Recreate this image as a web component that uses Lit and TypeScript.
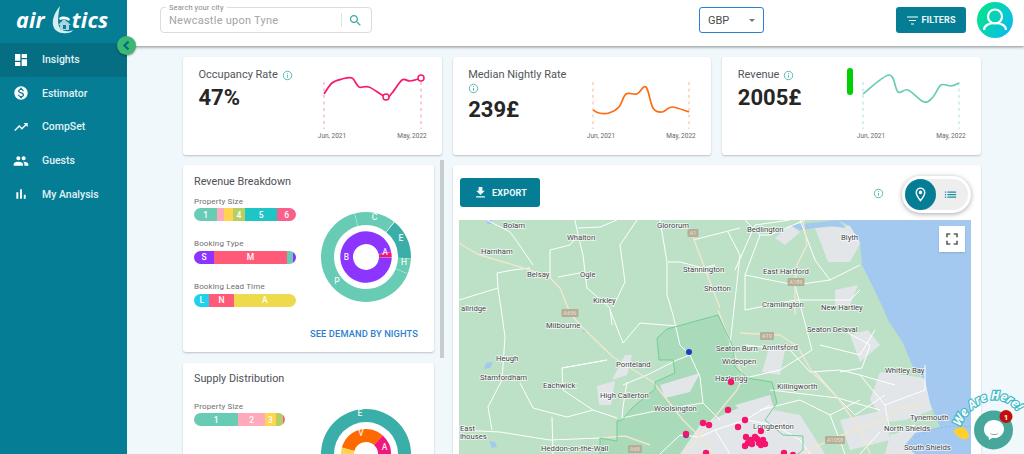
import { LitElement, html, css, svg } from "lit";
import { customElement } from "lit/decorators.js";

type Pt = [number, number];

const ICONS: Record<string, string> = {
  dashboard: "M3 13h8V3H3v10zm0 8h8v-6H3v6zm10 0h8V11h-8v10zm0-18v6h8V3h-8z",
  money:
    "M12 2C6.48 2 2 6.48 2 12s4.48 10 10 10 10-4.48 10-10S17.52 2 12 2zm1.41 16.09V20h-2.67v-1.93c-1.71-.36-3.16-1.46-3.27-3.4h1.96c.1 1.05.82 1.87 2.65 1.87 1.96 0 2.4-.98 2.4-1.59 0-.83-.44-1.61-2.67-2.14-2.48-.6-4.18-1.62-4.18-3.67 0-1.72 1.39-2.84 3.11-3.21V4h2.67v1.95c1.86.45 2.79 1.86 2.85 3.39H14.3c-.05-1.11-.64-1.87-2.22-1.87-1.5 0-2.4.68-2.4 1.64 0 .84.65 1.39 2.67 1.91s4.18 1.39 4.18 3.91c-.01 1.83-1.38 2.83-3.12 3.16z",
  trend: "M16 6l2.29 2.29-4.88 4.88-4-4L2 16.59 3.41 18l6-6 4 4 6.3-6.29L22 12V6z",
  people:
    "M16 11c1.66 0 2.99-1.34 2.99-3S17.66 5 16 5c-1.66 0-3 1.34-3 3s1.34 3 3 3zm-8 0c1.66 0 2.99-1.34 2.99-3S9.66 5 8 5C6.34 5 5 6.34 5 8s1.34 3 3 3zm0 2c-2.33 0-7 1.17-7 3.5V19h14v-2.5c0-2.33-4.67-3.5-7-3.5zm8 0c-.29 0-.62.02-.97.05 1.16.84 1.97 1.97 1.97 3.45V19h6v-2.5c0-2.33-4.67-3.5-7-3.5z",
  bars: "M5 9.2h3V19H5zM10.6 5h2.8v14h-2.8zm5.6 8H19v6h-2.8z",
  search:
    "M15.5 14h-.79l-.28-.27C15.41 12.59 16 11.11 16 9.5 16 5.91 13.09 3 9.5 3S3 5.91 3 9.5 5.91 16 9.5 16c1.61 0 3.09-.59 4.23-1.57l.27.28v.79l5 4.99L20.49 19l-4.99-5zm-6 0C7.01 14 5 11.99 5 9.5S7.01 5 9.5 5 14 7.01 14 9.5 11.99 14 9.5 14z",
  download: "M19 9h-4V3H9v6H5l7 7 7-7zM5 18v2h14v-2H5z",
  pin: "M12 2C8.13 2 5 5.13 5 9c0 5.25 7 13 7 13s7-7.75 7-13c0-3.87-3.13-7-7-7zM7 9c0-2.76 2.24-5 5-5s5 2.24 5 5c0 2.88-2.88 7.19-5 9.88C9.92 16.21 7 11.85 7 9zm5-2.5a2.5 2.5 0 1 0 0 5 2.5 2.5 0 0 0 0-5z",
  list: "M3 13h2v-2H3v2zm0 4h2v-2H3v2zm0-8h2V7H3v2zm4 4h14v-2H7v2zm0 4h14v-2H7v2zM7 7v2h14V7H7z",
  fullscreen: "M7 14H5v5h5v-2H7v-3zm-2-4h2V7h3V5H5v5zm12 7h-3v2h5v-5h-2v3zM14 5v2h3v3h2V5h-5z",
};

const icon = (name: string, cls = "") =>
  html`<svg class="icon ${cls}" viewBox="0 0 24 24"><path d=${ICONS[name]}></path></svg>`;

const info = () =>
  html`<svg class="info" viewBox="0 0 12 12">
    <circle cx="6" cy="6" r="4.6"></circle>
    <path d="M6 5.4v3M6 3.4v1"></path>
  </svg>`;

// smooth line through the sampled points
function smooth(p: Pt[]): string {
  let d = `M${p[0][0]} ${p[0][1]}`;
  for (let i = 0; i < p.length - 1; i++) {
    const a = p[Math.max(i - 1, 0)];
    const b = p[i];
    const c = p[i + 1];
    const e = p[Math.min(i + 2, p.length - 1)];
    const k = 0.17;
    d += `C${b[0] + (c[0] - a[0]) * k} ${b[1] + (c[1] - a[1]) * k} ${c[0] - (e[0] - b[0]) * k} ${c[1] - (e[1] - b[1]) * k} ${c[0]} ${c[1]}`;
  }
  return d;
}

function arc(cx: number, cy: number, r0: number, r1: number, from: number, to: number): string {
  const pt = (r: number, deg: number) => {
    const a = ((deg - 90) * Math.PI) / 180;
    return `${(cx + r * Math.cos(a)).toFixed(2)} ${(cy + r * Math.sin(a)).toFixed(2)}`;
  };
  const large = to - from > 180 ? 1 : 0;
  return `M${pt(r1, from)}A${r1} ${r1} 0 ${large} 1 ${pt(r1, to)}L${pt(r0, to)}A${r0} ${r0} 0 ${large} 0 ${pt(r0, from)}Z`;
}

interface Kpi {
  title: string;
  value: string;
  color: string;
  dash: string;
  points: Pt[];
  x1: number;
  rings?: boolean;
  pill?: boolean;
  wrap?: boolean;
}

const KPIS: Kpi[] = [
  {
    title: "Occupancy Rate",
    value: "47%",
    color: "#f9186f",
    dash: "#ff8fb8",
    x1: 113,
    rings: true,
    points: [[16, 37], [24, 26], [34, 22], [44, 21], [51, 30], [61, 30], [78, 40], [84, 36], [94, 23], [102, 24], [113, 21]],
  },
  {
    title: "Median Nightly Rate",
    value: "239£",
    color: "#ff6a0f",
    dash: "#ffb48c",
    x1: 112,
    wrap: true,
    points: [[16, 53], [22, 56], [32, 56], [42, 50], [49, 37], [60, 37], [69, 30], [76, 51], [85, 55], [95, 50], [112, 55]],
  },
  {
    title: "Revenue",
    value: "2005£",
    color: "#68ccb5",
    dash: "#a9e3d5",
    x1: 112,
    pill: true,
    points: [[16, 37], [42, 18], [51, 35], [61, 33], [77, 45], [86, 40], [94, 28], [104, 29], [112, 26]],
  },
];

const NAV = [
  ["dashboard", "Insights"],
  ["money", "Estimator"],
  ["trend", "CompSet"],
  ["people", "Guests"],
  ["bars", "My Analysis"],
];

type Seg = [string, number, string];

const BREAKDOWN: { label: string; segs: Seg[] }[] = [
  {
    label: "Property Size",
    segs: [["1", 23.3, "#68ccb5"], ["", 7, "#ffa9bd"], ["", 8.3, "#ffd451"], ["4", 12.3, "#b5cf63"], ["5", 32, "#1fc4c4"], ["6", 18.7, "#f7608a"]],
  },
  {
    label: "Booking Type",
    segs: [["S", 20, "#8b35ff"], ["M", 73, "#ff5a78"], ["", 5.7, "#68ccb5"], ["", 3.3, "#8b35ff"]],
  },
  {
    label: "Booking Lead Time",
    segs: [["L", 15.3, "#1ed2ee"], ["N", 24.3, "#ff5a78"], ["A", 62, "#eeda4d"]],
  },
];

const SUPPLY: Seg[] = [["1", 44.3, "#68ccb5"], ["2", 26.7, "#ffa9bd"], ["3", 11, "#ffd451"], ["", 7.3, "#b5cf63"], ["", 1.7, "#f7608a"]];

const ROADS_WHITE = [
  "487,220 510,232 518,243 533,265",
  "575,220 578,235 570,245 550,250 550,278",
  "578,235 583,255 585,272 558,277",
  "585,272 587,288 610,308 612,325",
  "617,220 600,227 578,228",
  "637,220 620,245 625,282 613,307",
  "660,220 667,262 667,295 673,315 680,345 690,355",
  "668,262 680,262 703,268 715,265",
  "459,300 498,288 497,273 513,270 530,268",
  "498,288 502,315 505,337 502,380 488,407 492,430",
  "459,430 500,432 550,440 600,438",
  "562,368 607,360 562,368 563,390 593,410 617,418",
  "520,383 533,408 567,417 593,410",
  "552,417 553,454",
  "610,310 623,343 640,323 677,326",
  "623,385 647,375 677,360 690,355 700,377 703,403 720,420",
  "622,418 623,407 627,382",
  "622,418 660,410 703,403",
  "735,270 755,225 790,220",
  "693,240 740,228",
  "728,232 740,255 735,300 730,345",
  "745,220 760,235 770,235 805,220",
  "760,235 745,275 745,310",
  "745,275 795,285 830,280 860,265",
  "745,310 795,300 850,300 860,290",
  "800,220 815,260 830,280",
  "795,285 812,350 780,370 745,378",
  "745,345 790,350 810,372 840,370 860,375 895,385",
  "815,372 838,398 880,410",
  "843,330 870,345 862,368 840,372",
  "820,345 860,355 875,330",
  "860,375 885,405 925,390 925,365",
  "885,405 890,432 915,425",
  "770,390 838,398 855,415 885,395",
  "760,410 800,400 830,415 860,400",
  "830,415 845,454",
  "775,425 800,440 810,454",
  "880,432 860,454",
  "700,437 715,430 745,420 775,425",
  "715,430 730,454",
  "745,420 770,405",
  "660,454 680,435 700,437",
];

const ROADS_BEIGE = [
  "459,243 477,254 530,270 550,278 560,288 570,313 580,325 613,357 653,382 683,420 700,437 715,454",
  "718,310 733,350 743,377 737,390 698,437 685,454",
  "693,237 710,282 720,308",
  "803,220 807,245 797,265 795,282 795,315",
  "740,333 780,335 798,347 812,372 838,398 862,433 870,454",
  "802,453 837,437 887,418 900,408 923,404",
  "600,438 625,436 650,445",
];

const URBAN = [
  "815,228 860,225 862,240 850,262 828,262",
  "597,386 615,381 611,405 599,405",
  "612,380 625,355 632,355 627,375",
  "660,385 700,373 690,392 665,398",
  "770,345 785,350 780,375 762,372",
  "850,335 868,330 880,345 860,362",
  "880,372 925,378 932,410 905,420 885,422 870,400",
  "700,425 745,405 800,415 825,454 680,454",
  "840,420 885,410 890,440 850,450",
  "890,435 925,425 930,454 885,454",
  "775,238 790,225 800,232 785,245",
  "735,405 770,395 775,412 745,415",
  "835,290 858,285 850,305 835,305",
];

const LABELS: [string, number, number][] = [
  ["Bolam", 503, 227.5], ["Whalton", 567, 240], ["Harnham", 481, 254], ["Belsay", 527, 277], ["Ogle", 580, 277],
  ["Kirkley", 593, 303], ["Glororum", 657, 227.5], ["Stannington", 683, 272], ["Shotton", 704, 291], ["allridge", 461, 311],
  ["Bedlington", 747, 232], ["Blyth", 841, 240], ["East Hartford", 763, 274], ["Cramlington", 762, 307], ["New Hartley", 821, 310],
  ["Milbourne", 546, 328], ["Heugh", 496, 361], ["Stamfordham", 480, 380], ["Eachwick", 543, 388], ["Ponteland", 616, 367],
  ["High Callerton", 600, 398], ["Woolsington", 654, 411], ["Seaton Burn", 716, 351], ["Wideopen", 722, 364], ["Hazlerigg", 715, 381],
  ["East", 460, 431], ["lhouses", 460, 439], ["Heddon-on-the-Wall", 541, 451], ["Seaton Delaval", 807, 332], ["Annitsford", 762, 350],
  ["Whitley Bay", 885, 373], ["Killingworth", 777, 389], ["Longbenton", 753, 429], ["Tynemouth", 910, 420], ["North Shields", 884, 431],
  ["South Shields", 904, 450],
];

const SHIELDS: [string, number, number, number][] = [
  ["A1", 693, 233, 11],
  ["A696", 570, 313, 17],
  ["A19", 767, 336, 14],
  ["A189", 796, 282, 17],
  ["A1058", 835, 440, 20],
  ["A69", 635, 449, 14],
];

const DOTS: Pt[] = [
  [731, 382], [728, 410], [745, 420], [738, 427], [703, 423], [709, 425], [686, 434], [746, 437], [745, 446], [706, 453],
  [748, 443], [761, 431], [755, 437], [759, 443], [763, 440], [752, 444], [757, 439], [765, 444], [751, 440], [761, 445],
  [784, 453], [793, 455],
];

@customElement("app-root")
export class AppRoot extends LitElement {
  static styles = css`
    :host {
      display: block;
      height: 454px;
      overflow: hidden;
      position: relative;
      background: #f1f8fb;
      font-family: Roboto, "Liberation Sans", sans-serif;
      color: #3c4043;
    }
    .icon {
      fill: currentColor;
      display: block;
    }
    .info {
      width: 11px;
      height: 11px;
      flex: none;
      fill: none;
      stroke: #4db6ac;
      stroke-width: 1;
    }
    .shell {
      display: flex;
      height: 454px;
    }
    .side {
      width: 127px;
      flex: none;
      background: #047d95;
      color: #fff;
      position: relative;
      z-index: 2;
    }
    .logo {
      height: 43px;
      display: flex;
      align-items: center;
      padding: 0 0 4px 16px;
      box-sizing: border-box;
      font: italic 700 21.5px "Open Sans", sans-serif;
      letter-spacing: 0.2px;
    }
    .logo svg {
      width: 24px;
      height: 30px;
      margin: 0 -2px 0 5px;
    }
    .nav-item {
      height: 33.6px;
      display: flex;
      align-items: center;
      padding-left: 13px;
      gap: 13px;
      font-size: 10.5px;
      font-weight: 500;
      color: #e3f2f5;
    }
    .nav-item .icon {
      width: 16px;
      height: 16px;
      color: #fff;
    }
    .nav-item.active {
      background: #056e83;
    }
    .toggle {
      position: absolute;
      left: 117px;
      top: 36px;
      width: 19px;
      height: 19px;
      border-radius: 50%;
      background: #3db874;
      box-shadow: 0 1px 2px rgba(0, 0, 0, 0.4);
      z-index: 3;
    }
    .toggle svg {
      display: block;
      width: 19px;
      height: 19px;
      fill: none;
      stroke: #056e83;
      stroke-width: 2.4;
    }
    .body {
      flex: 1;
      min-width: 0;
    }
    .top {
      height: 46px;
      background: #fff;
      box-shadow: 0 1px 3px rgba(0, 0, 0, 0.45);
      display: flex;
      align-items: center;
      padding: 0 10px 6px 33px;
      box-sizing: border-box;
      position: relative;
      z-index: 1;
    }
    .search {
      width: 212px;
      height: 26px;
      box-sizing: border-box;
      border: 1px solid #dcdcdc;
      border-radius: 4px;
      display: flex;
      align-items: center;
      padding: 0 8px;
      position: relative;
      font-size: 11px;
      letter-spacing: 0.25px;
      color: #a4a4a4;
    }
    .search .float {
      position: absolute;
      left: 5px;
      top: -5px;
      background: #fff;
      padding: 0 3px;
      font-size: 7.5px;
      color: #8a8a8a;
      letter-spacing: 0.1px;
    }
    .search .place {
      flex: 1;
    }
    .search .divider {
      width: 1px;
      height: 14px;
      background: #e2e2e2;
    }
    .search .icon {
      width: 15px;
      height: 15px;
      margin: 0 0 0 6px;
      color: #3aa99f;
    }
    .select {
      margin-left: 327px;
      width: 65px;
      height: 26px;
      box-sizing: border-box;
      border: 1.5px solid #2b7fd6;
      border-radius: 3px;
      display: flex;
      align-items: center;
      justify-content: space-between;
      padding: 0 8px 0 8px;
      font-size: 11px;
      color: #4a4a4a;
    }
    .caret {
      width: 0;
      height: 0;
      border-left: 3.5px solid transparent;
      border-right: 3.5px solid transparent;
      border-top: 3.5px solid #777;
    }
    .filters {
      margin-left: 132px;
      width: 70px;
      height: 26px;
      border-radius: 3px;
      background: #047d95;
      color: #e9f6f8;
      display: flex;
      align-items: center;
      justify-content: center;
      gap: 2px;
      font-size: 9px;
      font-weight: 700;
      letter-spacing: 0.1px;
    }
    .filters svg {
      width: 13px;
      height: 11px;
      fill: none;
      stroke: #fff;
      stroke-width: 1.1;
    }
    .avatar {
      margin-left: 11px;
      width: 36px;
      height: 36px;
      border-radius: 50%;
      background: linear-gradient(120deg, #05e38c 10%, #09b9f5 95%);
      flex: none;
    }
    .avatar svg {
      display: block;
      width: 36px;
      height: 36px;
      fill: none;
      stroke: #fff;
      stroke-width: 2.2;
    }
    .main {
      padding: 11px 43px 0 56px;
    }
    .kpis {
      display: grid;
      grid-template-columns: repeat(3, minmax(0, 1fr));
      gap: 11px;
    }
    .card {
      background: #fff;
      border-radius: 3px;
      box-shadow: 0 1px 2px rgba(0, 0, 0, 0.22);
    }
    .kpi {
      height: 98px;
      display: flex;
      justify-content: space-between;
      box-sizing: border-box;
      padding: 11px 0 0 15.500px;
    }
    .kpi-text {
      min-width: 0;
    }
    .kpi-title {
      display: flex;
      align-items: center;
      flex-wrap: wrap;
      gap: 1px 4px;
      font-size: 11px;
      line-height: 14px;
      color: #51565b;
    }
    .kpi-title span {
      white-space: nowrap;
    }
    .kpi-title.wrap {
      width: 100px;
    }
    .kpi-value {
      font-size: 22px;
      font-weight: 700;
      line-height: 26px;
      margin-top: 3px;
      color: #262626;
    }
    .spark {
      width: 134px;
      height: 88px;
      flex: none;
      margin-top: -11px;
    }
    .spark text {
      font: 6.5px Roboto, sans-serif;
      fill: #666;
      text-anchor: middle;
    }
    .lower {
      display: flex;
      gap: 19px;
      margin-top: 10px;
    }
    .col {
      width: 251px;
      flex: none;
      display: flex;
      flex-direction: column;
      gap: 11px;
      position: relative;
    }
    .thumb {
      position: absolute;
      left: 257px;
      top: -5px;
      width: 4px;
      height: 198px;
      background: #c6cccf;
    }
    .panel {
      padding: 10px 11px 0;
      box-sizing: border-box;
      position: relative;
    }
    .breakdown {
      height: 187px;
    }
    .supply {
      height: 130px;
      padding-top: 9px;
    }
    .panel-title {
      font-size: 10.8px;
      line-height: 14px;
      color: #4d5156;
    }
    .group {
      margin-top: 6.500px;
      margin-bottom: 17.300px;
      width: 102px;
    }
    .supply .group {
      width: 91px;
      margin-top: 14.500px;
    }
    .group-label {
      font-size: 8px;
      line-height: 11px;
      letter-spacing: 0.15px;
      color: #6f6f6f;
      margin-bottom: 1.500px;
      white-space: nowrap;
    }
    .bar {
      height: 13px;
      display: flex;
      border-radius: 7px;
      overflow: hidden;
    }
    .bar span {
      display: flex;
      align-items: center;
      justify-content: center;
      font-size: 8.5px;
      font-weight: 500;
      color: #fff;
    }
    .donut {
      position: absolute;
      left: 131px;
      width: 104px;
      height: 104px;
    }
    .breakdown .donut {
      top: 40px;
    }
    .supply .donut {
      top: 39px;
    }
    .donut text {
      font: 500 8.5px Roboto, sans-serif;
      fill: #fff;
      fill-opacity: 0.9;
      text-anchor: middle;
    }
    .see {
      position: absolute;
      right: 16px;
      bottom: 13px;
      font-size: 9.3px;
      font-weight: 500;
      letter-spacing: 0.1px;
      color: #2f7fd0;
    }
    .mapcard {
      flex: 1;
      height: 300px;
      padding: 13px 10px 0 6px;
      box-sizing: border-box;
    }
    .map-head {
      display: flex;
      align-items: flex-start;
      height: 42px;
    }
    .export {
      width: 80px;
      height: 29px;
      margin-left: 1px;
      border-radius: 3px;
      background: #047d95;
      color: #eef8fa;
      display: flex;
      align-items: center;
      justify-content: center;
      gap: 4px;
      font-size: 9px;
      font-weight: 700;
      letter-spacing: 0.2px;
    }
    .export .icon {
      width: 15px;
      height: 15px;
    }
    .map-head .info {
      margin: 10px 18px 0 auto;
    }
    .switch {
      width: 69px;
      height: 37px;
      margin-top: -2px;
      box-sizing: border-box;
      border: 3px solid #fff;
      border-radius: 19px;
      background: #eeeeee;
      box-shadow: 0 1px 5px rgba(0, 0, 0, 0.35);
      display: flex;
      align-items: center;
    }
    .switch .on {
      width: 31px;
      height: 31px;
      border-radius: 50%;
      background: #047d95;
      color: #fff;
      display: flex;
      align-items: center;
      justify-content: center;
    }
    .switch .on .icon {
      width: 17px;
      height: 17px;
    }
    .switch > .icon {
      width: 15px;
      height: 15px;
      margin-left: 7px;
      color: #1e8ea6;
    }
    .map {
      position: relative;
      height: 240px;
      overflow: hidden;
    }
    .map > svg {
      display: block;
      width: 512px;
      height: 240px;
    }
    .map text {
      font: 7.7px Roboto, sans-serif;
      fill: #3f4347;
      stroke: #fff;
      stroke-width: 1.6px;
      stroke-opacity: 0.8;
      paint-order: stroke;
    }
    .map text.shield {
      font-size: 5.5px;
      fill: #e8e2d4;
      stroke: none;
      text-anchor: middle;
    }
    .full {
      position: absolute;
      right: 6px;
      top: 6px;
      width: 26px;
      height: 26px;
      background: #fff;
      box-shadow: 0 1px 2px rgba(0, 0, 0, 0.15);
      color: #5f6368;
      display: flex;
      align-items: center;
      justify-content: center;
    }
    .full .icon {
      width: 20px;
      height: 20px;
    }
    .chat {
      position: absolute;
      left: 944px;
      top: 380px;
      width: 80px;
      height: 74px;
      z-index: 4;
    }
    .chat svg {
      display: block;
      width: 80px;
      height: 74px;
      overflow: visible;
    }
    .chat text.wave {
      font: italic 700 12px "Open Sans", sans-serif;
      fill: #fff;
      stroke: #3fb9c6;
      stroke-width: 2.4px;
      paint-order: stroke;
    }
    .chat text.count {
      font: 700 8px Roboto, sans-serif;
      fill: #fff;
      text-anchor: middle;
    }
  `;

  renderBar(segs: Seg[], total = 102) {
    return html`<div class="bar" style="width:${total}px">
      ${segs.map(([t, w, c]) => html`<span style="flex:${w} 0 0;background:${c}">${t}</span>`)}
    </div>`;
  }

  renderSpark(k: Kpi) {
    return html`<svg class="spark" viewBox="0 0 134 88">
      ${k.pill ? svg`<rect x="0" y="11" width="6" height="27" rx="3" fill="#00d000"></rect>` : ""}
      <path d="M16 25V72M${k.x1} 25V72" stroke=${k.dash} stroke-width="1" stroke-dasharray="3 3.5" fill="none"></path>
      <path d=${smooth(k.points)} stroke=${k.color} stroke-width="1.7" fill="none"></path>
      ${k.rings
        ? svg`<circle cx="78" cy="40" r="3" fill="#fff" stroke=${k.color} stroke-width="1.5"></circle>
            <circle cx="113" cy="21" r="3" fill="#fff" stroke=${k.color} stroke-width="1.5"></circle>`
        : ""}
      <text x="24" y="80.5">Jun, 2021</text>
      <text x="104" y="80.5">May, 2022</text>
    </svg>`;
  }

  renderMap() {
    return html`<svg viewBox="459 220 512 240">
      <rect x="459" y="220" width="512" height="240" fill="#bce1c6"></rect>
      <path
        d="M718 315L678 326 667 329 657 338 659 360 673 360 675 373 655 382 655 389 633 407 622 420 617 421 617 441 600 438 600 460 790 460 803 450 803 436 783 435 765 420 777 403 772 382 747 378 735 367 733 347Z"
        fill="#a9dab9"
      ></path>
      ${URBAN.map((p) => svg`<polygon points=${p} fill="#e2e6e9"></polygon>`)}
      <path
        d="M838 220L850 226 860 242 862 265 872 285 883 308 888 320 903 343 913 367 925 380 930 403 940 427 915 433 905 445 915 454 945 460 971 460 971 220Z"
        fill="#a3c9f1"
      ></path>
      <path d="M790 225L820 222 838 220 846 228 830 226 800 230Z" fill="#a3c9f1"></path>
      <path d="M487 220h5v4h-5zM486 363l7-1-3 6-6 1zM489 441l6 1 2 5-5 1zM583 330h4v2h-4z" fill="#a3c9f1"></path>
      <path d="M915 438C930 428 950 424 971 427" fill="none" stroke="#7fb4ea" stroke-width="0.8" stroke-dasharray="2 2"></path>
      ${ROADS_WHITE.map(
        (p) => svg`<polyline points=${p} fill="none" stroke="#fff" stroke-width="1" stroke-linejoin="round"></polyline>`
      )}
      ${ROADS_BEIGE.map(
        (p) => svg`<polyline points=${p} fill="none" stroke="#f3e6cf" stroke-width="1.4" stroke-linejoin="round"></polyline>`
      )}
      <path
        d="M718 315L678 326 667 329 657 338 659 360 673 360 675 373 655 382 655 389 633 407 622 420 617 421 617 441 600 438 600 460M790 460L803 450 803 436 783 435 765 420 777 403 772 382 747 378 735 367 733 347 718 315"
        fill="none"
        stroke="#6fcf97"
        stroke-width="1"
      ></path>
      ${SHIELDS.map(
        ([t, x, y, w]) => svg`<rect x=${x - w / 2} y=${y - 4} width=${w} height="8" rx="1" fill="#b8ad97"></rect>
          <text class="shield" x=${x} y=${y + 2}>${t}</text>`
      )}
      ${LABELS.map(([t, x, y]) => svg`<text x=${x} y=${y}>${t}</text>`)}
      <circle cx="689" cy="352" r="3" fill="#1a3fc4"></circle>
      <circle cx="686" cy="435" r="3" fill="#1a3fc4"></circle>
      ${DOTS.map(([x, y]) => svg`<circle cx=${x} cy=${y} r="3.2" fill="#f5146e"></circle>`)}
    </svg>`;
  }

  render() {
    return html`
      <div class="shell">
        <aside class="side">
          <div class="logo">
            <span>air</span>
            <svg viewBox="0 0 24 30">
              <path d="M10 1C5 7 2 14 3 20c1 6 7 9 14 8 3 0 5-1 6-3-4 2-10 2-13-2-3-4-2-13 0-22z" fill="#d6edf2"></path>
              <path d="M9 13c3-2 8-2 11 1l-1 2c-3-2-6-2-9-1z" fill="#fff"></path>
              <path d="M8 20l6-6 7 6h-2v5h-9v-5z" fill="#a9d6e0"></path>
              <rect x="13" y="20" width="3" height="4" fill="#047d95"></rect>
            </svg>
            <span>tics</span>
          </div>
          ${NAV.map(
            ([ic, label], i) =>
              html`<div class="nav-item ${i === 0 ? "active" : ""}">${icon(ic)}<span>${label}</span></div>`
          )}
          <div class="toggle">
            <svg viewBox="0 0 19 19"><path d="M11.5 5.5L7.5 9.5l4 4"></path></svg>
          </div>
        </aside>
        <div class="body">
          <header class="top">
            <div class="search">
              <span class="float">Search your city</span>
              <span class="place">Newcastle upon Tyne</span>
              <span class="divider"></span>
              ${icon("search")}
            </div>
            <div class="select"><span>GBP</span><span class="caret"></span></div>
            <div class="filters">
              <svg viewBox="0 0 13 11"><path d="M1 2h11M3 5.5h7M5 9h3"></path></svg>
              <span>FILTERS</span>
            </div>
            <div class="avatar">
              <svg viewBox="0 0 36 36">
                <circle cx="18" cy="14.500" r="7"></circle>
                <path d="M7 28c0-4 4-7 11-7s11 3 11 7"></path>
              </svg>
            </div>
          </header>
          <main class="main">
            <section class="kpis">
              ${KPIS.map(
                (k) => html`<div class="card kpi">
                  <div class="kpi-text">
                    <div class="kpi-title ${k.wrap ? "wrap" : ""}">
                      <span>${k.title}</span>${info()}
                    </div>
                    <div class="kpi-value">${k.value}</div>
                  </div>
                  ${this.renderSpark(k)}
                </div>`
              )}
            </section>
            <section class="lower">
              <div class="col">
                <div class="thumb"></div>
                <div class="card panel breakdown">
                  <div class="panel-title">Revenue Breakdown</div>
                  ${BREAKDOWN.map(
                    (g) => html`<div class="group">
                      <div class="group-label">${g.label}</div>
                      ${this.renderBar(g.segs)}
                    </div>`
                  )}
                  <svg class="donut" viewBox="0 0 104 104">
                    <path d=${arc(52, 52, 32, 45, 112, 345)} fill="#68ccb5"></path>
                    <path d=${arc(52, 52, 32, 45, 345.5, 398.5)} fill="#68ccb5"></path>
                    <path d=${arc(52, 52, 32, 45, 39.5, 91.5)} fill="#3aaea8"></path>
                    <path d=${arc(52, 52, 32, 45, 92, 111.5)} fill="#68ccb5"></path>
                    <path d=${arc(52, 52, 13, 25.7, 91, 438)} fill="#8b35ff"></path>
                    <path d=${arc(52, 52, 13, 25.7, 78.5, 90.5)} fill="#f5146e"></path>
                    <text x="60.5" y="15">C</text>
                    <text x="87" y="36">E</text>
                    <text x="90" y="60">H</text>
                    <text x="23" y="79">P</text>
                    <text x="32.5" y="55">B</text>
                    <text x="71" y="50">A</text>
                  </svg>
                  <span class="see">SEE DEMAND BY NIGHTS</span>
                </div>
                <div class="card panel supply">
                  <div class="panel-title">Supply Distribution</div>
                  <div class="group">
                    <div class="group-label">Property Size</div>
                    ${this.renderBar(SUPPLY, 91)}
                  </div>
                  <svg class="donut" viewBox="0 0 104 104">
                    <path d=${arc(52, 52, 32, 45, 0, 180)} fill="#3aaea8"></path>
                    <path d=${arc(52, 52, 32, 45, 180, 360)} fill="#3aaea8"></path>
                    <path d=${arc(52, 52, 12, 25, -75, 42)} fill="#ff6a00"></path>
                    <path d=${arc(52, 52, 12, 25, 42, 100)} fill="#ee1a7b"></path>
                    <path d=${arc(52, 52, 12, 25, -100, -75)} fill="#ffd451"></path>
                    <text x="46" y="14">E</text>
                    <text x="47" y="33.5">V</text>
                    <text x="70.5" y="47.5">A</text>
                  </svg>
                </div>
              </div>
              <div class="card mapcard">
                <div class="map-head">
                  <div class="export">${icon("download")}<span>EXPORT</span></div>
                  ${info()}
                  <div class="switch">
                    <span class="on">${icon("pin")}</span>
                    ${icon("list")}
                  </div>
                </div>
                <div class="map">
                  ${this.renderMap()}
                  <div class="full">${icon("fullscreen")}</div>
                </div>
              </div>
            </section>
          </main>
        </div>
      </div>
      <div class="chat">
        <svg viewBox="0 0 80 74">
          <defs>
            <path id="wave-arc" d="M16 47C24 27 42 19 52 19.500C62 20 71 26 80 40"></path>
          </defs>
          <text class="wave"><textPath href="#wave-arc">We Are Here!</textPath></text>
          <path d="M9 52c3-3 4-5 6-4l2-1c2-1 6 3 8 8 1 3-3 5-6 4-4-1-7-5-10-7z" fill="#ffcf2e"></path>
          <circle cx="49.500" cy="50" r="19.500" fill="#47a79a"></circle>
          <path d="M50 40c-5.800 0-10 4-10 9.500 0 3.500 1.800 6 4.500 7.500l.5 3 3-2c.7.100 1.300.1 2 .1 5.800 0 10-4 10-9.100C60 44 55.800 40 50 40z" fill="#fff"></path>
          <path d="M46 53c2.500 1.800 6 1.800 8.500 0-1 2.500-7.500 2.500-8.500 0z" fill="#3c7f76"></path>
          <circle cx="62" cy="36.500" r="6.500" fill="#c40d0d"></circle>
          <text class="count" x="62" y="39.500">1</text>
        </svg>
      </div>
    `;
  }
}
